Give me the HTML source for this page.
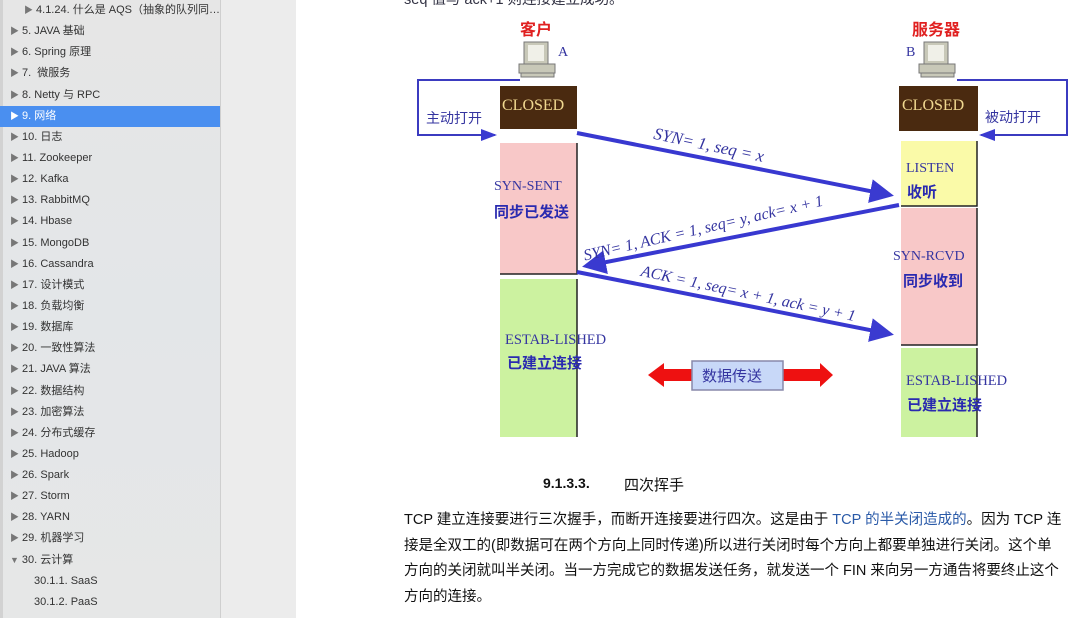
<!DOCTYPE html>
<html><head><meta charset="utf-8"><style>
*{margin:0;padding:0;box-sizing:border-box}
body{width:1080px;height:618px;overflow:hidden;position:relative;background:#fff;font-family:"Liberation Sans","Noto Sans CJK SC",sans-serif}
#side{position:absolute;left:0;top:0;width:221px;height:618px;background:linear-gradient(#e6e6e6,#e3e6e8 50%,#e6e7e7);border-right:1px solid #cfcfcf}
#side:before{content:"";position:absolute;left:0;top:0;width:3px;height:618px;background:#d2d2d2}
#gap{position:absolute;left:221px;top:0;width:75px;height:618px;background:#ececec}
.it{position:absolute;left:0;width:220px;height:21px;line-height:21px;font-size:11px;color:#333;padding-left:10px;white-space:nowrap}
.it b{font-weight:normal;color:#777;font-size:9px;margin-right:3px}
.sel{background:#4a8ff0;color:#fff}.sel b{color:#fff}
.t{position:absolute;white-space:nowrap}
.ser{font-family:"Liberation Serif","Noto Serif CJK SC",serif}
p.l{position:absolute;left:404px;font-size:14.5px;color:#111;white-space:nowrap;font-family:"Liberation Sans","Noto Sans CJK SC",sans-serif}
</style></head><body>
<div id="side">
<div class="it" style="top:0;padding-left:24px"><b>▶</b>4.1.24. 什么是 AQS（抽象的队列同…</div>
<div class="it" style="top:21px"><b>▶</b>5. JAVA 基础</div>
<div class="it" style="top:42px"><b>▶</b>6. Spring 原理</div>
<div class="it" style="top:63px"><b>▶</b>7.&nbsp;&nbsp;微服务</div>
<div class="it" style="top:85px"><b>▶</b>8. Netty 与 RPC</div>
<div class="it sel" style="top:106px"><b>▶</b>9. 网络</div>
<div class="it" style="top:127px"><b>▶</b>10. 日志</div>
<div class="it" style="top:148px"><b>▶</b>11. Zookeeper</div>
<div class="it" style="top:169px"><b>▶</b>12. Kafka</div>
<div class="it" style="top:190px"><b>▶</b>13. RabbitMQ</div>
<div class="it" style="top:211px"><b>▶</b>14. Hbase</div>
<div class="it" style="top:233px"><b>▶</b>15. MongoDB</div>
<div class="it" style="top:254px"><b>▶</b>16. Cassandra</div>
<div class="it" style="top:275px"><b>▶</b>17. 设计模式</div>
<div class="it" style="top:296px"><b>▶</b>18. 负载均衡</div>
<div class="it" style="top:317px"><b>▶</b>19. 数据库</div>
<div class="it" style="top:338px"><b>▶</b>20. 一致性算法</div>
<div class="it" style="top:359px"><b>▶</b>21. JAVA 算法</div>
<div class="it" style="top:381px"><b>▶</b>22. 数据结构</div>
<div class="it" style="top:402px"><b>▶</b>23. 加密算法</div>
<div class="it" style="top:423px"><b>▶</b>24. 分布式缓存</div>
<div class="it" style="top:444px"><b>▶</b>25. Hadoop</div>
<div class="it" style="top:465px"><b>▶</b>26. Spark</div>
<div class="it" style="top:486px"><b>▶</b>27. Storm</div>
<div class="it" style="top:507px"><b>▶</b>28. YARN</div>
<div class="it" style="top:528px"><b>▶</b>29. 机器学习</div>
<div class="it" style="top:550px"><b>▼</b>30. 云计算</div>
<div class="it" style="top:571px;padding-left:34px">30.1.1. SaaS</div>
<div class="it" style="top:592px;padding-left:34px">30.1.2. PaaS</div>
</div>
<div id="gap"></div>

<div class="t" style="left:404px;top:-12px;font-size:14.5px;color:#334">seq 值与 ack+1 则连接建立成功。</div>

<svg style="position:absolute;left:0;top:0" width="1080" height="618">
<defs>
<marker id="ah" markerWidth="6" markerHeight="6" refX="5" refY="3" orient="auto" markerUnits="strokeWidth"><path d="M0,0L6,3L0,6z" fill="#3a3ad0"/></marker>
<marker id="as" markerWidth="8" markerHeight="8" refX="7" refY="4" orient="auto"><path d="M0,1L8,4L0,7z" fill="#3a3ad0"/></marker>
</defs>
<path d="M520,80H418V135H495" fill="none" stroke="#3b3bc0" stroke-width="2" marker-end="url(#as)"/>
<path d="M957,80H1067V135H981" fill="none" stroke="#3b3bc0" stroke-width="2" marker-end="url(#as)"/>
<g fill="#c8c8b8" stroke="#777" stroke-width="1">
<rect x="524" y="42" width="24" height="22"/><rect x="519" y="64" width="36" height="9"/><rect x="521" y="73" width="33" height="4"/>
<rect x="924" y="42" width="24" height="22"/><rect x="919" y="64" width="36" height="9"/><rect x="921" y="73" width="33" height="4"/>
</g>
<rect x="528" y="45" width="16" height="16" fill="#f0f0e8"/><rect x="928" y="45" width="16" height="16" fill="#f0f0e8"/>
<rect x="500" y="86" width="77" height="43" fill="#4a2a10"/>
<rect x="899" y="86" width="79" height="45" fill="#4a2a10"/>
<rect x="500" y="143" width="77" height="131" fill="#f8c8c8"/>
<rect x="500" y="279" width="77" height="158" fill="#ccf2a0"/>
<rect x="901" y="141" width="76" height="65" fill="#fafaa8"/>
<rect x="901" y="208" width="76" height="137" fill="#f8c8c8"/>
<rect x="901" y="348" width="76" height="89" fill="#ccf2a0"/>
<g stroke="#222" stroke-width="1.5" fill="none">
<path d="M577,143V274H500"/><path d="M577,279V437"/><path d="M977,141V206H901"/><path d="M977,208V345H901"/><path d="M977,348V437"/>
</g>
<g stroke="#3838d0" stroke-width="4" fill="none" marker-end="url(#ah)">
<path d="M577,133L890,195"/>
<path d="M899,205L586,266"/>
<path d="M577,272L890,334"/>
</g>
<path d="M648,375L664,363V369H820V363L833,375L820,387V381H664V387Z" fill="#ee1111"/>
<rect x="692" y="361" width="91" height="29" fill="#c8d8f8" stroke="#88a" stroke-width="1.5"/>
</svg>

<div class="t" style="left:520px;top:16px;font-size:16px;color:#e02020;font-weight:bold">客户</div>
<div class="t" style="left:912px;top:16px;font-size:16px;color:#e02020;font-weight:bold">服务器</div>
<div class="t ser" style="left:558px;top:45px;font-size:14px;color:#3434a0">A</div>
<div class="t ser" style="left:906px;top:45px;font-size:14px;color:#3434a0">B</div>
<div class="t" style="left:426px;top:108px;font-size:14px;color:#3434a0">主动打开</div>
<div class="t" style="left:985px;top:107px;font-size:14px;color:#3434a0">被动打开</div>
<div class="t ser" style="left:502px;top:97px;font-size:16px;color:#f0d890">CLOSED</div>
<div class="t ser" style="left:902px;top:97px;font-size:16px;color:#f0d890">CLOSED</div>
<div class="t ser" style="left:494px;top:179px;font-size:14px;color:#3434a0">SYN-SENT</div>
<div class="t" style="left:494px;top:201px;font-size:15px;color:#2a2ab0;font-weight:bold">同步已发送</div>
<div class="t ser" style="left:906px;top:161px;font-size:14px;color:#3434a0">LISTEN</div>
<div class="t" style="left:907px;top:181px;font-size:15px;color:#2a2ab0;font-weight:bold">收听</div>
<div class="t ser" style="left:893px;top:249px;font-size:14px;color:#3434a0">SYN-RCVD</div>
<div class="t" style="left:903px;top:270px;font-size:15px;color:#2a2ab0;font-weight:bold">同步收到</div>
<div class="t ser" style="left:505px;top:332px;font-size:14.5px;color:#3434a0">ESTAB-LISHED</div>
<div class="t" style="left:507px;top:352px;font-size:15px;color:#2a2ab0;font-weight:bold">已建立连接</div>
<div class="t ser" style="left:906px;top:373px;font-size:14.5px;color:#3434a0">ESTAB-LISHED</div>
<div class="t" style="left:907px;top:394px;font-size:15px;color:#2a2ab0;font-weight:bold">已建立连接</div>
<div class="t" style="left:702px;top:365px;font-size:15px;color:#3434a0">数据传送</div>
<div class="t ser" style="left:656px;top:124px;font-size:17px;color:#3434a0;font-style:italic;transform:rotate(12deg);transform-origin:0 0">SYN= 1, seq = x</div>
<div class="t ser" style="left:582px;top:248px;font-size:16px;color:#3434a0;font-style:italic;transform:rotate(-13deg);transform-origin:0 0">SYN= 1, ACK = 1, seq= y, ack= x + 1</div>
<div class="t ser" style="left:643px;top:263px;font-size:16px;color:#3434a0;font-style:italic;transform:rotate(12deg);transform-origin:0 0">ACK = 1, seq= x + 1, ack = y + 1</div>

<div class="t" style="left:543px;top:475px;font-size:14px;color:#111;font-weight:bold">9.1.3.3.</div>
<div class="t" style="left:624px;top:474px;font-size:15px;color:#111">四次挥手</div>
<p class="l" style="top:508px">TCP 建立连接要进行三次握手，而断开连接要进行四次。这是由于 <span style="color:#2a5aa8">TCP 的半关闭造成的</span>。因为 TCP 连</p>
<p class="l" style="top:534px">接是全双工的(即数据可在两个方向上同时传递)所以进行关闭时每个方向上都要单独进行关闭。这个单</p>
<p class="l" style="top:559px">方向的关闭就叫半关闭。当一方完成它的数据发送任务，就发送一个 FIN 来向另一方通告将要终止这个</p>
<p class="l" style="top:585px">方向的连接。</p>
</body></html>
